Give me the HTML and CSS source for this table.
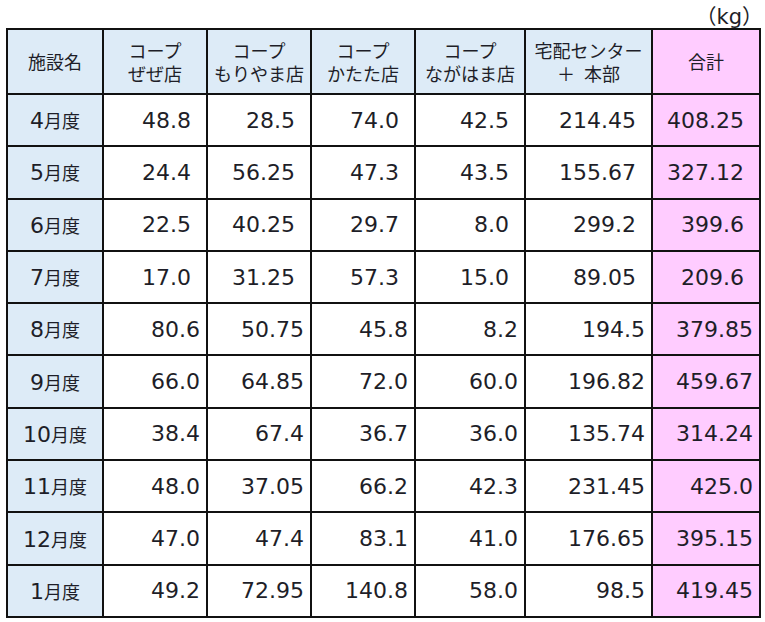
FILE: index.html
```html
<!DOCTYPE html>
<html lang="ja">
<head>
<meta charset="utf-8">
<link rel="stylesheet" href="styles.css">
</head>
<body>
<div class="sheet">
  <div class="unit"><span class="paren">（</span>kg<span class="paren">）</span></div>
  <table class="data">
    <colgroup>
      <col class="c-name">
      <col class="c-store">
      <col class="c-store">
      <col class="c-store">
      <col class="c-store4">
      <col class="c-center">
      <col class="c-total">
    </colgroup>
    <thead>
      <tr>
        <th class="name">施設名</th>
        <th>コープ<br>ぜぜ店</th>
        <th>コープ<br>もりやま店</th>
        <th>コープ<br>かたた店</th>
        <th>コープ<br>ながはま店</th>
        <th>宅配センター<br>＋<span class="gap"></span>本部</th>
        <th class="total">合計</th>
      </tr>
    </thead>
    <tbody>
      <tr class="wide"><th class="name">4<span class="j">月度</span></th><td>48.8</td><td>28.5</td><td>74.0</td><td>42.5</td><td>214.45</td><td class="total">408.25</td></tr>
      <tr class="wide"><th class="name">5<span class="j">月度</span></th><td>24.4</td><td>56.25</td><td>47.3</td><td>43.5</td><td>155.67</td><td class="total">327.12</td></tr>
      <tr class="wide"><th class="name">6<span class="j">月度</span></th><td>22.5</td><td>40.25</td><td>29.7</td><td>8.0</td><td>299.2</td><td class="total">399.6</td></tr>
      <tr class="wide"><th class="name">7<span class="j">月度</span></th><td>17.0</td><td>31.25</td><td>57.3</td><td>15.0</td><td>89.05</td><td class="total">209.6</td></tr>
      <tr><th class="name">8<span class="j">月度</span></th><td>80.6</td><td>50.75</td><td>45.8</td><td>8.2</td><td>194.5</td><td class="total">379.85</td></tr>
      <tr><th class="name">9<span class="j">月度</span></th><td>66.0</td><td>64.85</td><td>72.0</td><td>60.0</td><td>196.82</td><td class="total">459.67</td></tr>
      <tr><th class="name">10<span class="j">月度</span></th><td>38.4</td><td>67.4</td><td>36.7</td><td>36.0</td><td>135.74</td><td class="total">314.24</td></tr>
      <tr><th class="name">11<span class="j">月度</span></th><td>48.0</td><td>37.05</td><td>66.2</td><td>42.3</td><td>231.45</td><td class="total">425.0</td></tr>
      <tr><th class="name">12<span class="j">月度</span></th><td>47.0</td><td>47.4</td><td>83.1</td><td>41.0</td><td>176.65</td><td class="total">395.15</td></tr>
      <tr><th class="name">1<span class="j">月度</span></th><td>49.2</td><td>72.95</td><td>140.8</td><td>58.0</td><td>98.5</td><td class="total">419.45</td></tr>
    </tbody>
  </table>
</div>
</body>
</html>
```

FILE: styles.css
```css
html, body {
  margin: 0;
  padding: 0;
  background: #ffffff;
}

body {
  font-family: "DejaVu Sans", "Noto Sans CJK JP", sans-serif;
  font-size: 22px;
  color: #1e1e28;
}

.sheet {
  width: 765px;
}

.j {
  font-family: "Noto Sans CJK JP", sans-serif;
  font-size: 18px;
}

.unit {
  height: 28px;
  box-sizing: border-box;
  padding-top: 3px;
  width: 763px;
  text-align: right;
  line-height: 24px;
  font-size: 21px;
}

.paren {
  font-family: "Noto Sans CJK JP", sans-serif;
  font-size: 21px;
}

.data {
  border-collapse: collapse;
  table-layout: fixed;
  width: 755px;
  margin-left: 6px;
}

.c-name { width: 96px; }
.c-store { width: 104px; }
.c-store4 { width: 110px; }
.c-center { width: 127px; }
.c-total { width: 108px; }

.data th,
.data td {
  border: 2px solid #111111;
  padding: 0;
  vertical-align: middle;
  white-space: nowrap;
}

.data thead tr {
  height: 65px;
}

.data thead th {
  font-family: "Noto Sans CJK JP", sans-serif;
  font-size: 18px;
  font-weight: normal;
  line-height: 23px;
  text-align: center;
  background: #ddebf7;
}

.gap {
  display: inline-block;
  width: 9px;
}

.data tbody tr {
  height: 52.3px;
}

.data tbody th.name {
  font-weight: normal;
  text-align: center;
  background: #ddebf7;
}

.data tbody td {
  text-align: right;
  padding-right: 6px;
}

.data tbody tr.wide td {
  padding-right: 15px;
}

.data .total,
.data thead th.total {
  background: #ffccff;
}
```
